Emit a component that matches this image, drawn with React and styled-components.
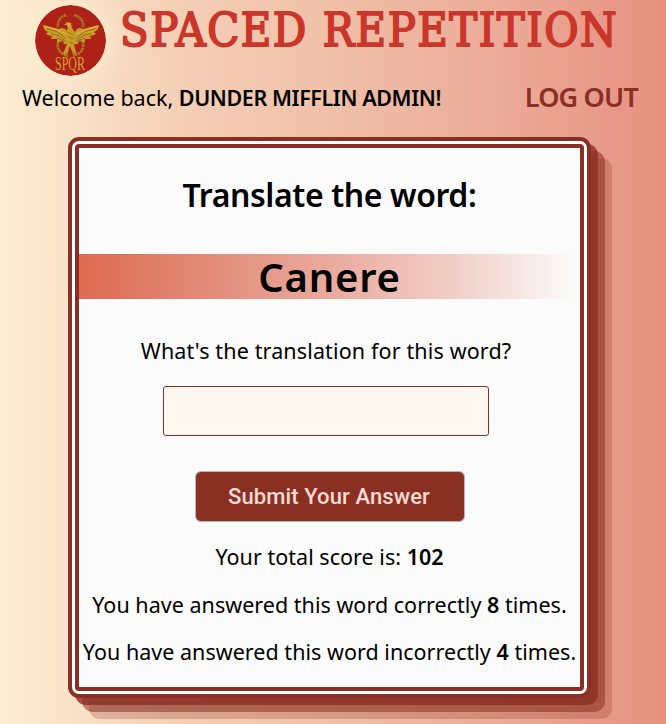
import React from "react";
import styled, { createGlobalStyle } from "styled-components";

const Global = createGlobalStyle`
  * { box-sizing: border-box; }
  body { margin: 0; overflow: hidden; color: #000; font-family: "Noto Sans", "Open Sans", sans-serif; }
`;

const Page = styled.div`
  height: 724px;
  overflow: hidden;
  background: linear-gradient(90deg, #fcedd2 0%, #f9e3c9 10%, #f5d1b7 25%, #f0bfa8 50%, #ebab98 75%, #e8998a 91%, #e5937c 100%);
`;

const Header = styled.header`
  height: 80px;
  display: flex;
  padding: 5px 0 0 35px;
`;

const Logo = styled.svg`
  width: 71px;
  height: 71px;
  flex: none;
  border-radius: 50%;
  box-shadow: 0 0 24px 4px #fcedcf;
`;

const Title = styled.h1`
  margin: 0 0 0 14px;
  font: 400 46.5px/50px "DejaVu Serif Condensed", "DejaVu Serif", serif;
  font-stretch: condensed;
  letter-spacing: 1.5px;
  color: #ca362a;
  -webkit-text-stroke: 1.8px #ca362a;
  white-space: nowrap;
`;

const UserBar = styled.div`
  height: 57px;
  display: flex;
  justify-content: space-between;
  padding: 0 28px 0 22px;
  white-space: nowrap;
`;

const Welcome = styled.div`
  font-size: 21.5px;
  line-height: 36px;
`;

const Strong = styled.strong`
  font-weight: 600;
  letter-spacing: ${(p) => p.$spacing || "0"};
`;

const LogOut = styled.a`
  font-size: 27px;
  font-weight: 600;
  line-height: 34px;
  letter-spacing: -0.8px;
  color: #8a2f23;
`;

const Frame = styled.main`
  width: 523px;
  height: 561px;
  margin-left: 68px;
  padding: 3px;
  border: 4px solid #8a2f23;
  border-radius: 11px;
  background: #fff;
  box-shadow: 7px 7px rgba(138, 47, 35, 0.8), 14px 14px rgba(138, 47, 35, 0.55), 21px 21px rgba(138, 47, 35, 0.25);
`;

const Card = styled.section`
  height: 547px;
  border: 4px solid #8a2f23;
  border-radius: 4px;
  background: #fbfbfb;
  display: flex;
  flex-direction: column;
  align-items: center;
  white-space: nowrap;
`;

const Heading = styled.h2`
  margin: 24px 0 0;
  height: 46px;
  font-size: 32px;
  line-height: 46px;
  font-weight: 600;
  letter-spacing: -0.4px;
`;

const Banner = styled.div`
  width: 100%;
  height: 45px;
  margin-top: 36px;
  background: linear-gradient(90deg, #dd6b50, #e28470 20%, #eaaa9e 50%, #f1cec7 75%, #fbfbfb 99%);
  text-align: center;
  font-size: 40px;
  line-height: 46px;
  font-weight: 600;
  letter-spacing: 0.8px;
`;

const Question = styled.label`
  margin: 34px 7px 0 0;
  height: 36px;
  font-size: 21.5px;
  line-height: 36px;
  letter-spacing: 0.14px;
`;

const Answer = styled.input`
  width: 326px;
  height: 50px;
  margin: 17px 7px 0 0;
  border: 1.5px solid #8a2f23;
  border-radius: 3px;
  background: #fdf9f1;
  outline: 0;
`;

const Submit = styled.button`
  width: 270px;
  height: 51px;
  margin: 35px 0 17px;
  padding: 0 1px 0 0;
  border: 1px solid #b9b5b5;
  border-radius: 6px;
  background: #893023;
  color: #fcdad6;
  font: 500 22px Roboto, sans-serif;
  letter-spacing: 0.1px;
`;

const Stat = styled.p`
  margin: 0 0 11.5px;
  height: 36px;
  font-size: 21.5px;
  line-height: 36px;
  letter-spacing: 0.03px;
`;

const wing = "M32 27 Q29 21 24 24 L8 20 Q8 25 13 27 L11 29 Q15 31 17 31 L16 34 Q20 34 22 34 L22 37 Q26 37 28 36 L29 39 L33 39Z";

function Emblem() {
  return (
    <Logo viewBox="0 0 71 71" aria-label="SPQR">
      <circle cx="35.5" cy="35.5" r="35.5" fill="#ae2117" />
      <g fill="none" stroke="#a87922" strokeWidth="2.6" strokeDasharray="2.4 .6">
        <path d="M31 10 Q22 13 23 22 M39 10 Q49 13 48 22" />
        <path d="M24 34 Q19 47 33 51 M47 34 Q52 47 38 51" />
      </g>
      <g fill="#c89b29">
        <path d={wing} />
        <path d={wing} transform="matrix(-1 0 0 1 72 0)" />
        <path d="M29 20 L32 17 L36 18 L37 23 Q44 31 39 40 L42 50 L38 49 L35 41 L32 50 L28 49 L32 39 Q28 30 33 23 L32 20Z" />
      </g>
      <g fill="none" stroke="#76551a" strokeWidth=".6">
        <path d="M12 24 Q23 25 31 34 M16 29 Q25 29 31 37 M22 33 L29 36 M60 24 Q48 25 41 34 M56 29 Q47 29 41 37 M50 33 L43 36" />
        <path d="M33 27 L38 30 M33 32 L39 34 M34 37 L38 39 M30 48 L34 50 M38 46 L42 50" />
      </g>
      <path d="M10 21 L24 26 L31 29 M62 21 L48 26 L41 29 M33 22 L34 18" fill="none" stroke="#e4bd3f" strokeWidth="1" />
      <text x="35" y="65" textAnchor="middle" textLength="30" lengthAdjust="spacingAndGlyphs" fill="#d0a035" fontFamily="Liberation Serif, serif" fontSize="19">SPQR</text>
    </Logo>
  );
}

export default function App() {
  return (
    <Page>
      <Global />
      <Header>
        <Emblem />
        <Title>SPACED REPETITION</Title>
      </Header>
      <UserBar>
        <Welcome>Welcome back, <Strong $spacing="-0.4px">DUNDER MIFFLIN ADMIN!</Strong></Welcome>
        <LogOut>LOG OUT</LogOut>
      </UserBar>
      <Frame>
        <Card>
          <Heading>Translate the word:</Heading>
          <Banner>Canere</Banner>
          <Question htmlFor="answer">What's the translation for this word?</Question>
          <Answer id="answer" />
          <Submit>Submit Your Answer</Submit>
          <Stat>Your total score is: <Strong>102</Strong></Stat>
          <Stat>You have answered this word correctly <Strong>8</Strong> times.</Stat>
          <Stat>You have answered this word incorrectly <Strong>4</Strong> times.</Stat>
        </Card>
      </Frame>
    </Page>
  );
}
